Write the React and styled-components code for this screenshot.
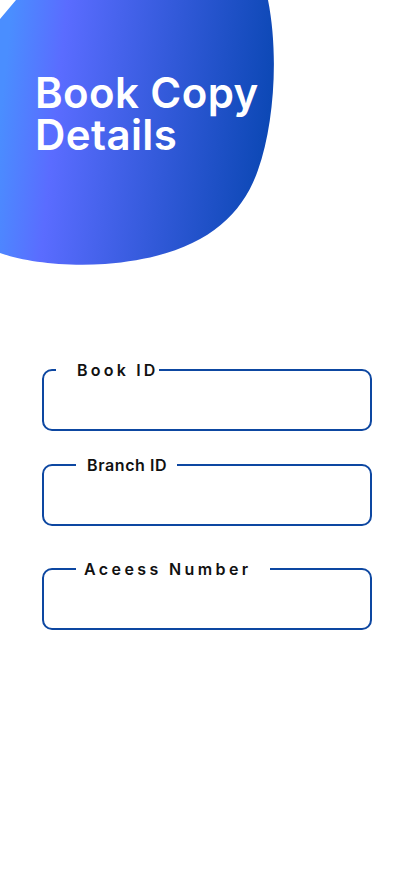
import React from 'react'
import styled, { createGlobalStyle } from 'styled-components'

const GlobalStyle = createGlobalStyle`
  html, body {
    margin: 0;
    padding: 0;
    background: #ffffff;
  }
  * {
    box-sizing: border-box;
  }
`

// page
const Page = styled.main`
  width: 414px;
  min-height: 896px;
  background: #ffffff;
  font-family: Inter, "Noto Sans", sans-serif;
  display: flex;
  flex-direction: column;
`

// header with the blob behind the title
const Header = styled.header`
  position: relative;
  height: 266px;
  padding: 72px 0 0 35px;
`

const Blob = styled.svg`
  position: absolute;
  left: 0;
  top: 0;
  z-index: 0;
`

const Title = styled.h1`
  position: relative;
  z-index: 1;
  margin: 0;
  color: #ffffff;
  font-family: Inter, "Open Sans", sans-serif;
  font-weight: 600;
  font-size: 42px;
  line-height: 42px;
  letter-spacing: 0.4px;
`

const TitleLine = styled.span`
  display: block;
  height: 42px;
`

// form
const Form = styled.form`
  display: flex;
  flex-direction: column;
  padding: 95px 42px 0 42px;
`

const Field = styled.fieldset`
  margin: 0 0 ${p => p.$gap}px 0;
  padding: 0;
  height: 70px;
  border: 2px solid #0d47a1;
  border-radius: 10px;
`

const Label = styled.legend`
  margin-left: ${p => p.$offset}px;
  padding: 0 ${p => p.$padRight}px 0 ${p => p.$padLeft}px;
  color: #111111;
  font-family: Inter, "Noto Sans", sans-serif;
  font-weight: 600;
  font-size: 16px;
  line-height: 18px;
  letter-spacing: ${p => p.$spacing}px;
`

const fields = [
  { label: 'Book ID', offset: 12, padLeft: 21, padRight: 0, spacing: 3.2, gap: 25 },
  { label: 'Branch ID', offset: 32, padLeft: 11, padRight: 10, spacing: 0.6, gap: 34 },
  { label: 'Aceess Number', offset: 32, padLeft: 8, padRight: 18, spacing: 3.4, gap: 0 },
]

const App = () => {
  return (
    <>
      <GlobalStyle />
      <Page>
        <Header>
          <Blob width="280" height="268" viewBox="0 0 280 268">
            <defs>
              <linearGradient id="blobFill" x1="0" y1="0.45" x2="1" y2="0.55">
                <stop offset="0" stopColor="#4a8eff" />
                <stop offset="0.2" stopColor="#5a6cff" />
                <stop offset="1" stopColor="#0a47b3" />
              </linearGradient>
            </defs>
            <path
              d="M16 0 L268 0 C279 55 274 125 258 170 C240 222 195 257 105 264 C62 267 22 261 0 253 L0 19 Z"
              fill="url(#blobFill)"
            />
          </Blob>
          <Title>
            <TitleLine>Book Copy</TitleLine>
            <TitleLine>Details</TitleLine>
          </Title>
        </Header>

        <Form>
          {fields.map(f => (
            <Field key={f.label} $gap={f.gap}>
              <Label $offset={f.offset} $padLeft={f.padLeft} $padRight={f.padRight} $spacing={f.spacing}>
                {f.label}
              </Label>
            </Field>
          ))}
        </Form>
      </Page>
    </>
  )
}

export default App
